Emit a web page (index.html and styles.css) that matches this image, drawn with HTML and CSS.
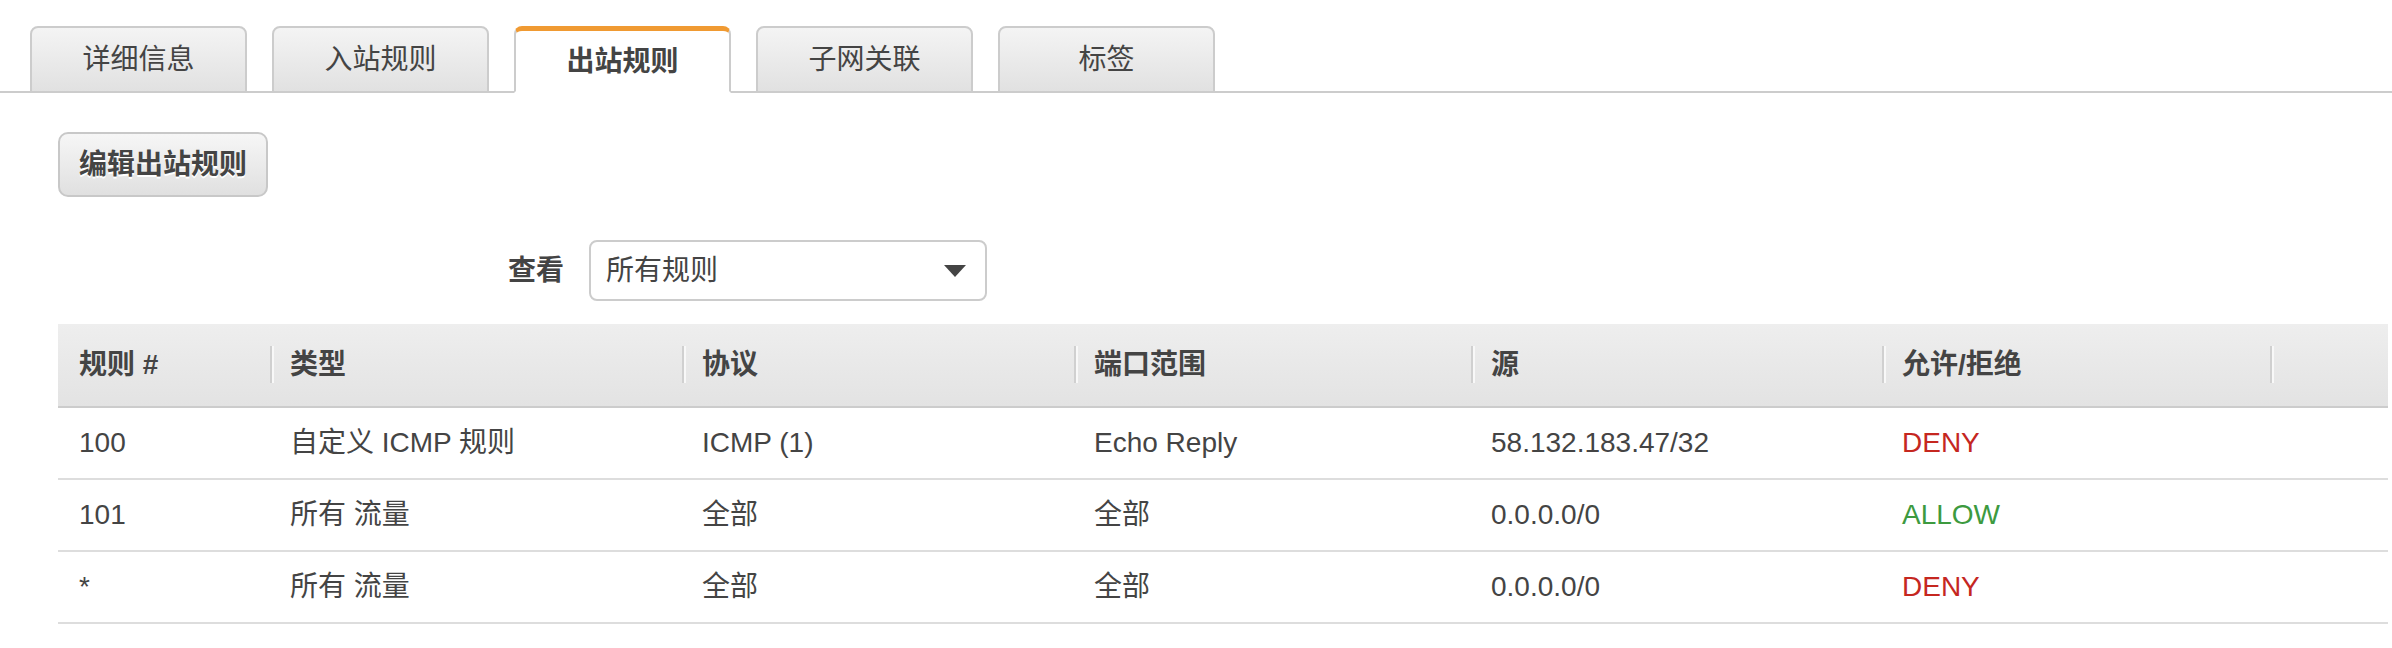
FILE: index.html
```html
<!DOCTYPE html>
<html lang="zh-CN">
<head>
<meta charset="utf-8">
<title>出站规则</title>
<link rel="stylesheet" href="styles.css">
</head>
<body>
<div class="tabs">
  <div class="tab">详细信息</div>
  <div class="tab">入站规则</div>
  <div class="tab active">出站规则</div>
  <div class="tab">子网关联</div>
  <div class="tab">标签</div>
</div>
<div class="content">
  <button class="btn">编辑出站规则</button>
  <div class="filter">
    <span class="filter-label">查看</span>
    <div class="select">
      <span>所有规则</span>
      <svg class="arrow" width="22" height="12" viewBox="0 0 22 12"><path d="M0 0 H22 L11 12 Z" fill="#444"/></svg>
    </div>
  </div>
  <div class="table">
    <div class="row head">
      <div class="cell">规则 #</div>
      <div class="cell sep">类型</div>
      <div class="cell sep">协议</div>
      <div class="cell sep">端口范围</div>
      <div class="cell sep">源</div>
      <div class="cell sep">允许/拒绝</div>
      <div class="cell sep"></div>
    </div>
    <div class="row">
      <div class="cell">100</div>
      <div class="cell">自定义 ICMP 规则</div>
      <div class="cell">ICMP (1)</div>
      <div class="cell">Echo Reply</div>
      <div class="cell">58.132.183.47/32</div>
      <div class="cell deny">DENY</div>
      <div class="cell"></div>
    </div>
    <div class="row">
      <div class="cell">101</div>
      <div class="cell">所有 流量</div>
      <div class="cell">全部</div>
      <div class="cell">全部</div>
      <div class="cell">0.0.0.0/0</div>
      <div class="cell allow">ALLOW</div>
      <div class="cell"></div>
    </div>
    <div class="row">
      <div class="cell">*</div>
      <div class="cell">所有 流量</div>
      <div class="cell">全部</div>
      <div class="cell">全部</div>
      <div class="cell">0.0.0.0/0</div>
      <div class="cell deny">DENY</div>
      <div class="cell"></div>
    </div>
  </div>
</div>
</body>
</html>
```

FILE: styles.css
```css
* { box-sizing: border-box; }
html, body {
  margin: 0;
  padding: 0;
  background: #fff;
}
body {
  font-family: "Liberation Sans", "Noto Sans CJK SC", sans-serif;
  font-size: 28px;
  color: #444;
  width: 2392px;
  height: 648px;
  overflow: hidden;
}
.tabs {
  display: flex;
  gap: 25px;
  padding: 26px 0 0 30px;
  border-bottom: 2px solid #cccccc;
}
.tab {
  width: 217px;
  height: 67px;
  margin-bottom: -2px;
  display: flex;
  align-items: center;
  justify-content: center;
  background: linear-gradient(#f4f4f4, #e1e1e1);
  border: 2px solid #cccccc;
  border-radius: 8px 8px 0 0;
  line-height: 1;
  color: #444;
}
.tab.active {
  background: #fff;
  border-top: 5px solid #f09a32;
  border-bottom-color: #fff;
  font-weight: bold;
  padding-top: 2px;
}
.content {
  padding: 39px 4px 0 58px;
}
.btn {
  display: block;
  height: 65px;
  padding: 0 19px;
  font-family: inherit;
  font-size: 28px;
  font-weight: bold;
  color: #444;
  line-height: 1;
  background: linear-gradient(#f6f6f6, #e0e0e0);
  border: 2px solid #c8c8c8;
  border-radius: 10px;
  text-shadow: 0 2px 0 #fff;
}
.filter {
  display: flex;
  align-items: center;
  gap: 25px;
  margin-top: 43px;
}
.filter-label {
  width: 506px;
  text-align: right;
  font-weight: bold;
  line-height: 1;
}
.select {
  width: 398px;
  height: 61px;
  border: 2px solid #cccccc;
  border-radius: 8px;
  display: flex;
  align-items: center;
  justify-content: space-between;
  padding: 0 19px 0 15px;
  line-height: 1;
}
.arrow { display: block; }
.table {
  margin-top: 23px;
}
.row {
  display: grid;
  grid-template-columns: 212px 412px 392px 397px 411px 388px 1fr;
  height: 72px;
  border-bottom: 2px solid #dddddd;
  align-items: center;
}
.row.head {
  height: 84px;
  background: linear-gradient(#eeeeee, #e3e3e3);
  border-bottom: 2px solid #cccccc;
  font-weight: bold;
}
.cell {
  position: relative;
  padding-left: 20px;
  line-height: 1;
  white-space: nowrap;
  height: 100%;
  display: flex;
  align-items: center;
}
.row .cell:first-child { padding-left: 21px; }
.cell.sep::before {
  content: "";
  position: absolute;
  left: 0;
  top: 22px;
  height: 37px;
  width: 2px;
  background: #d0d0d0;
  box-shadow: 2px 0 0 #f8f8f8;
}
.deny { color: #c5271f; }
.allow { color: #3d9a3f; }
```
